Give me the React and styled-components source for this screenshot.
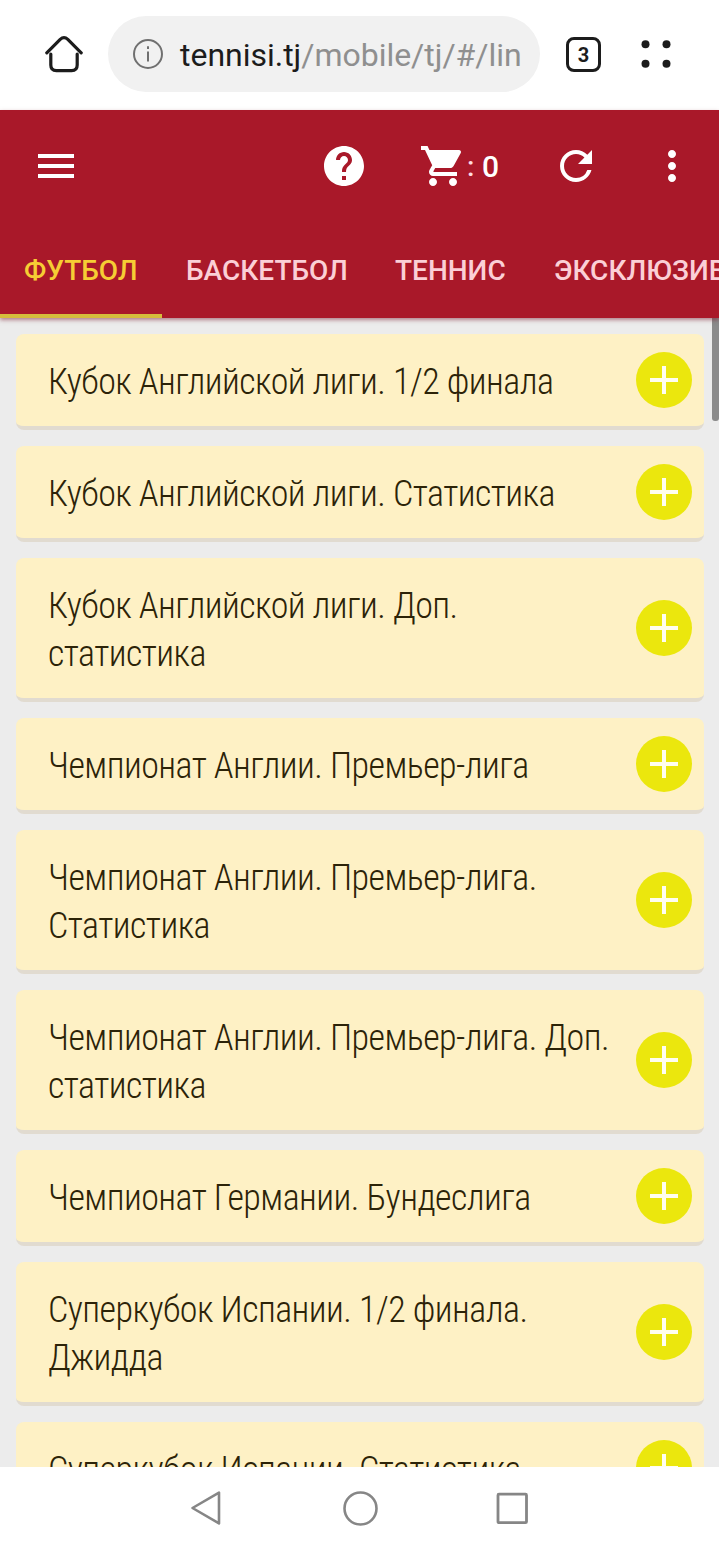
import React from "react";
import styled, { createGlobalStyle } from "styled-components";
import { MdMenu, MdHelp, MdShoppingCart, MdRefresh, MdMoreVert } from "react-icons/md";

const GlobalStyle = createGlobalStyle`
    *{
        box-sizing: border-box;
    }
    body{
        margin: 0;
        background-color: white;
        font-family: Roboto, "Noto Sans", sans-serif;
    }
`
const Container = styled.div`
    width: 719px;
    height: 1548px;
    display: flex;
    flex-direction: column;
    overflow: hidden;
    background-color: white;
`
const BrowserBar = styled.div`
    flex: none;
    height: 110px;
    display: flex;
    align-items: center;
    padding: 0 0 2px 44px;
    svg{
        flex: none;
        display: block;
    }
`
const AddressBar = styled.div`
    width: 432px;
    height: 76px;
    margin: 0 26px 0 24px;
    padding-left: 24px;
    display: flex;
    align-items: center;
    border-radius: 38px;
    background-color: #f1f1f1;
`
const Url = styled.div`
    margin-left: 16px;
    padding-top: 2px;
    font-size: 32px;
    line-height: 40px;
    letter-spacing: -0.02px;
    color: #8f8f8f;
    white-space: nowrap;
    span{
        color: #1c1c1c;
    }
`
const TabCount = styled.div`
    width: 35px;
    height: 35px;
    margin-right: 39px;
    padding-top: 1px;
    display: flex;
    justify-content: center;
    align-items: center;
    border: 3px solid #1c1c1c;
    border-radius: 8px;
    font-size: 20px;
    font-weight: 700;
    color: #1c1c1c;
`
const Header = styled.header`
    flex: none;
    height: 208px;
    position: relative;
    z-index: 1;
    background-color: #a91829;
    box-shadow: 0 2px 4px rgba(120,20,40,0.5);
`
const Toolbar = styled.div`
    height: 112px;
    padding: 0 23px 0 32px;
    display: flex;
    align-items: center;
    color: white;
    svg{
        flex: none;
        display: block;
    }
    .help{
        margin-left: auto;
    }
    .refresh{
        margin: 0 48px 0 50px;
    }
`
const CartButton = styled.div`
    display: flex;
    align-items: center;
    margin-left: 51px;
    .colon{
        width: 15px;
        font-size: 28px;
        font-weight: 500;
        color: #ffdbe0;
    }
    .count{
        width: 20px;
        font-size: 30px;
        font-weight: 500;
    }
`
const Tabs = styled.nav`
    height: 96px;
    display: flex;
    overflow: hidden;
`
const Tab = styled.div`
    flex: none;
    width: ${(props) => props.$width}px;
    height: 96px;
    padding: 4px 0 0 24px;
    display: flex;
    align-items: center;
    font-size: 28px;
    font-weight: 500;
    white-space: nowrap;
    color: ${(props) => (props.$active ? "#f6cd34" : "#fbcfd6")};
    border-bottom: 4px solid ${(props) => (props.$active ? "#d5bd3b" : "transparent")};
`
const List = styled.main`
    flex: 1;
    min-height: 0;
    position: relative;
    overflow: hidden;
    padding: 16px 15px 0 16px;
    display: flex;
    flex-direction: column;
    gap: 16px;
    background-color: #ececec;
`
const Card = styled.div`
    flex: none;
    display: flex;
    justify-content: space-between;
    align-items: center;
    padding: 22px 12px 22px 32px;
    border-radius: 8px;
    background-color: #fef1c5;
    border-bottom: 4px solid #e1dbd0;
`
const CardTitle = styled.div`
    width: 572px;
    margin: 2px 0 -2px;
    font-family: "Roboto Condensed", Roboto, "Noto Sans", sans-serif;
    font-stretch: 75%;
    font-weight: 300;
    font-size: 36px;
    line-height: 48px;
    letter-spacing: -0.54px;
    color: #2c2308;
`
const AddButton = styled.button`
    flex: none;
    width: 56px;
    height: 56px;
    margin: -6px 0;
    padding: 0;
    display: flex;
    justify-content: center;
    align-items: center;
    border: none;
    border-radius: 50%;
    background-color: #ebe70d;
`
const ScrollThumb = styled.div`
    position: absolute;
    top: 0;
    right: 0;
    width: 7px;
    height: 103px;
    border-radius: 0 0 3px 3px;
    background-color: #8b8b8b;
`
const NavBar = styled.footer`
    flex: none;
    height: 81px;
    padding: 0 190px 0 190px;
    display: flex;
    justify-content: space-between;
    align-items: center;
    background-color: white;
`

const tabs = [
    { name: "ФУТБОЛ", width: 162 },
    { name: "БАСКЕТБОЛ", width: 209 },
    { name: "ТЕННИС", width: 159 },
    { name: "ЭКСКЛЮЗИВ", width: 230 },
];

const leagues = [
    "Кубок Английской лиги. 1/2 финала",
    "Кубок Английской лиги. Статистика",
    "Кубок Английской лиги. Доп. статистика",
    "Чемпионат Англии. Премьер-лига",
    "Чемпионат Англии. Премьер-лига. Статистика",
    "Чемпионат Англии. Премьер-лига. Доп. статистика",
    "Чемпионат Германии. Бундеслига",
    "Суперкубок Испании. 1/2 финала. Джидда",
    "Суперкубок Испании. Статистика",
];

const App = () => {
    return (
        <>
            <GlobalStyle />
            <Container>
                <BrowserBar>
                    <svg width="40" height="40" viewBox="0 0 40 40" fill="none" stroke="#1c1c1c" strokeWidth="3.2" strokeLinecap="round" strokeLinejoin="round">
                        <path d="M2.8 18.8L16.2 5.4Q20 1.9 23.8 5.4L37.2 18.8" />
                        <path d="M6.8 20V31Q6.8 36.6 12.4 36.6H27.6Q33.2 36.6 33.2 31V20" />
                    </svg>
                    <AddressBar>
                        <svg width="32" height="32" viewBox="0 0 32 32" fill="none" stroke="#707070" strokeWidth="2">
                            <circle cx="16" cy="16" r="14" />
                            <path d="M16 13.5V23.5" />
                            <path d="M16 8.2V11" />
                        </svg>
                        <Url><span>tennisi.tj</span>/mobile/tj/#/lin</Url>
                    </AddressBar>
                    <TabCount>3</TabCount>
                    <svg width="32" height="32" viewBox="0 0 32 32" fill="#1c1c1c">
                        <circle cx="5.5" cy="6.3" r="4" />
                        <circle cx="26.5" cy="6.3" r="4" />
                        <circle cx="5.5" cy="25.8" r="4" />
                        <circle cx="26.5" cy="25.8" r="4" />
                    </svg>
                </BrowserBar>
                <Header>
                    <Toolbar>
                        <MdMenu size={48} />
                        <MdHelp className="help" size={48} />
                        <CartButton>
                            <MdShoppingCart size={48} />
                            <span className="colon">:</span>
                            <span className="count">0</span>
                        </CartButton>
                        <MdRefresh className="refresh" size={48} />
                        <MdMoreVert size={48} />
                    </Toolbar>
                    <Tabs>
                        {tabs.map((e, index) => (
                            <Tab key={e.name} $width={e.width} $active={index === 0}>{e.name}</Tab>
                        ))}
                    </Tabs>
                </Header>
                <List>
                    {leagues.map((e) => (
                        <Card key={e}>
                            <CardTitle>{e}</CardTitle>
                            <AddButton>
                                <svg width="28" height="28" viewBox="0 0 28 28" stroke="#fffef0" strokeWidth="4">
                                    <path d="M14 0V28M0 14H28" />
                                </svg>
                            </AddButton>
                        </Card>
                    ))}
                    <ScrollThumb />
                </List>
                <NavBar>
                    <svg width="34" height="38" viewBox="0 0 34 38" fill="none" stroke="#868686" strokeWidth="2.6" strokeLinejoin="round">
                        <path d="M2.5 19L29 3.6V34.4Z" />
                    </svg>
                    <svg width="36" height="36" viewBox="0 0 36 36" fill="none" stroke="#868686" strokeWidth="2.6">
                        <circle cx="18.5" cy="18.5" r="16" />
                    </svg>
                    <svg width="34" height="34" viewBox="0 0 34 34" fill="none" stroke="#868686" strokeWidth="2.8" strokeLinejoin="round">
                        <rect x="3" y="3.2" width="28.5" height="28.5" rx="1" />
                    </svg>
                </NavBar>
            </Container>
        </>
    );
};

export default App;
